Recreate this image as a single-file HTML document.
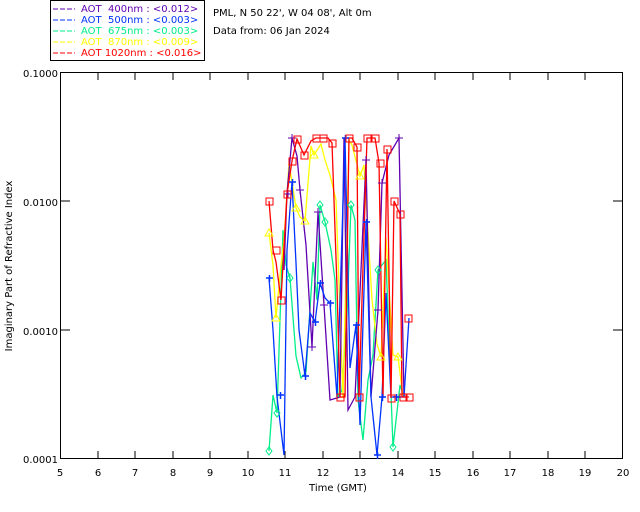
<!DOCTYPE html>
<html><head><meta charset="utf-8"><style>
html,body{margin:0;padding:0;background:#fff;}
svg{display:block;font-family:"DejaVu Sans","Liberation Sans",sans-serif;}
</style></head><body>
<svg width="640" height="512" viewBox="0 0 640 512" xmlns="http://www.w3.org/2000/svg">
<rect width="640" height="512" fill="#fff"/>
<rect x="50.5" y="0.5" width="154" height="60" fill="#fff" stroke="#000"/>
<g font-size="10">
<line x1="53" y1="9" x2="75" y2="9" stroke="#6000b0" stroke-dasharray="5,2"/>
<text x="81" y="12" fill="#6000b0" xml:space="preserve">AOT  400nm : &lt;0.012&gt;</text>
<line x1="53" y1="20" x2="75" y2="20" stroke="#0033ff" stroke-dasharray="5,2"/>
<text x="81" y="23" fill="#0033ff" xml:space="preserve">AOT  500nm : &lt;0.003&gt;</text>
<line x1="53" y1="31" x2="75" y2="31" stroke="#00ee88" stroke-dasharray="5,2"/>
<text x="81" y="34" fill="#00ee88" xml:space="preserve">AOT  675nm : &lt;0.003&gt;</text>
<line x1="53" y1="42" x2="75" y2="42" stroke="#ffff00" stroke-dasharray="5,2"/>
<text x="81" y="45" fill="#ffff00" xml:space="preserve">AOT  870nm : &lt;0.009&gt;</text>
<line x1="53" y1="53" x2="75" y2="53" stroke="#ff0000" stroke-dasharray="5,2"/>
<text x="81" y="56" fill="#ff0000" xml:space="preserve">AOT 1020nm : &lt;0.016&gt;</text>
<text x="213" y="16" fill="#000">PML, N 50 22', W 04 08', Alt 0m</text>
<text x="213" y="34" fill="#000">Data from: 06 Jan 2024</text>
</g>
<rect x="60.5" y="72.5" width="562" height="386" fill="none" stroke="#000"/>
<g stroke="#000">
<path d="M98 459v-8M135 459v-8M173 459v-8M210 459v-8M248 459v-8M285 459v-8M323 459v-8M360 459v-8M398 459v-8M435 459v-8M473 459v-8M510 459v-8M548 459v-8M585 459v-8"/>
<path d="M98 72v8M135 72v8M173 72v8M210 72v8M248 72v8M285 72v8M323 72v8M360 72v8M398 72v8M435 72v8M473 72v8M510 72v8M548 72v8M585 72v8"/>
<path d="M60 201h10M60 330h10M623 201h-10M623 330h-10"/>
</g>
<g font-size="10" fill="#000" text-anchor="middle">
<text x="60" y="476">5</text><text x="98" y="476">6</text><text x="135" y="476">7</text><text x="173" y="476">8</text><text x="210" y="476">9</text><text x="248" y="476">10</text><text x="285" y="476">11</text><text x="323" y="476">12</text><text x="360" y="476">13</text><text x="398" y="476">14</text><text x="435" y="476">15</text><text x="473" y="476">16</text><text x="510" y="476">17</text><text x="548" y="476">18</text><text x="585" y="476">19</text><text x="623" y="476">20</text>
<text x="338" y="491">Time (GMT)</text>
</g>
<g font-size="10" fill="#000" text-anchor="end">
<text x="58" y="77">0.1000</text><text x="58" y="206">0.0100</text><text x="58" y="335">0.0010</text><text x="58" y="463">0.0001</text>
</g>
<text x="12" y="266" font-size="10" text-anchor="middle" transform="rotate(-90 12 266)">Imaginary Part of Refractive Index</text>
<g fill="none" stroke-width="1.3">
<polyline stroke="#00ee88" points="269,451 273,395 277,413 280,320 283,230 286,265 290,278 296,356 301,378 306,372 313,262 317,300 320,205 325,222 331,250 335,280 338,397 342,390 347,315 351,205 355,220 358,400 363,440 368,380 373,355 378,270 386,260 393,447 400,385 404,397"/>
<polyline stroke="#ffff00" points="269,233 273,265 276,318 281,265 284,240 289,163 296,208 300,217 305,221 311,146 314,155 321,144 325,160 330,175 336,200 343,398 349,140 352,145 360,176 364,165 372,300 377,344 381,357 386,238 393,355 398,357 403,397"/>
<polyline stroke="#6000b0" points="284,270 287,193 292,138 297,156 300,190 306,245 312,347 318,212 324,305 330,400 340,397 344,138 348,410 355,397 361,270 366,160 371,397 378,310 382,183 389,155 399,138 404,397"/>
<polyline stroke="#0033ff" points="269,278 273,330 277,397 281,430 284,455 287,250 292,182 296,263 299,330 305,376 310,313 315,322 320,283 325,298 330,303 337,397 345,138 350,368 356,325 360,425 366,222 371,397 377,455 382,397 386,293 391,397 396,397 404,397 409,318"/>
<polyline stroke="#ff0000" points="269,201 273,250 276,262 281,300 287,194 292,161 297,139 304,155 311,141 316,138 320,138 324,138 328,138 332,143 337,287 340,397 345,397 349,138 352,138 357,147 359,397 367,138 371,138 375,138 379,163 383,398 387,149 391,398 394,201 400,214 402,397 406,397 409,397"/>
</g>
<g stroke="#6000b0" stroke-width="1">
<path d="M288 190v8M284 194h8M292 134v8M288 138h8M300 186v8M296 190h8M318 208v8M314 212h8M324 301v8M320 305h8M366 156v8M362 160h8M382 179v8M378 183h8M399 134v8M395 138h8M378 306v8M374 310h8M312 343v8M308 347h8"/>
</g>
<g stroke="#0033ff" stroke-width="1.5">
<path d="M266 278h7M269.5 275v7M277 395h7M280.5 392v7M289 182h7M292.5 179v7M302 376h7M305.5 373v7M312 322h7M315.5 319v7M317 283h7M320.5 280v7M327 303h7M330.5 300v7M342 138h7M345.5 135v7M353 325h7M356.5 322v7M363 222h7M366.5 219v7M374 455h7M377.5 452v7M379 397h7M382.5 394v7M393 397h7M396.5 394v7"/>
</g>
<g fill="none" stroke="#00ee88" stroke-width="1">
<path d="M269 447l3 4-3 4-3-4zM277 409l3 4-3 4-3-4zM290 274l3 4-3 4-3-4zM320 201l3 4-3 4-3-4zM325 218l3 4-3 4-3-4zM351 201l3 4-3 4-3-4zM378 266l3 4-3 4-3-4zM393 443l3 4-3 4-3-4z"/>
</g>
<g fill="none" stroke="#ffff00" stroke-width="1">
<path d="M269 229l4 7h-8zM276 314l4 7h-8zM296 204l4 7h-8zM305 217l4 7h-8zM314 151l4 7h-8zM360 172l4 7h-8zM381 353l4 7h-8zM398 353l4 7h-8z"/>
</g>
<g fill="none" stroke="#ff0000" stroke-width="1">
<rect x="266" y="198" width="7" height="7"/><rect x="273" y="247" width="7" height="7"/><rect x="278" y="297" width="7" height="7"/><rect x="284" y="191" width="7" height="7"/><rect x="289" y="158" width="7" height="7"/><rect x="294" y="136" width="7" height="7"/><rect x="301" y="152" width="7" height="7"/><rect x="313" y="135" width="7" height="7"/><rect x="320" y="135" width="7" height="7"/><rect x="329" y="140" width="7" height="7"/><rect x="337" y="394" width="7" height="7"/><rect x="346" y="135" width="7" height="7"/><rect x="354" y="144" width="7" height="7"/><rect x="356" y="394" width="7" height="7"/><rect x="364" y="135" width="7" height="7"/><rect x="372" y="135" width="7" height="7"/><rect x="377" y="160" width="7" height="7"/><rect x="384" y="146" width="7" height="7"/><rect x="388" y="395" width="7" height="7"/><rect x="391" y="198" width="7" height="7"/><rect x="397" y="211" width="7" height="7"/><rect x="400" y="394" width="7" height="7"/><rect x="406" y="394" width="7" height="7"/><rect x="405" y="315" width="7" height="7"/>
</g>
</svg>
</body></html>
